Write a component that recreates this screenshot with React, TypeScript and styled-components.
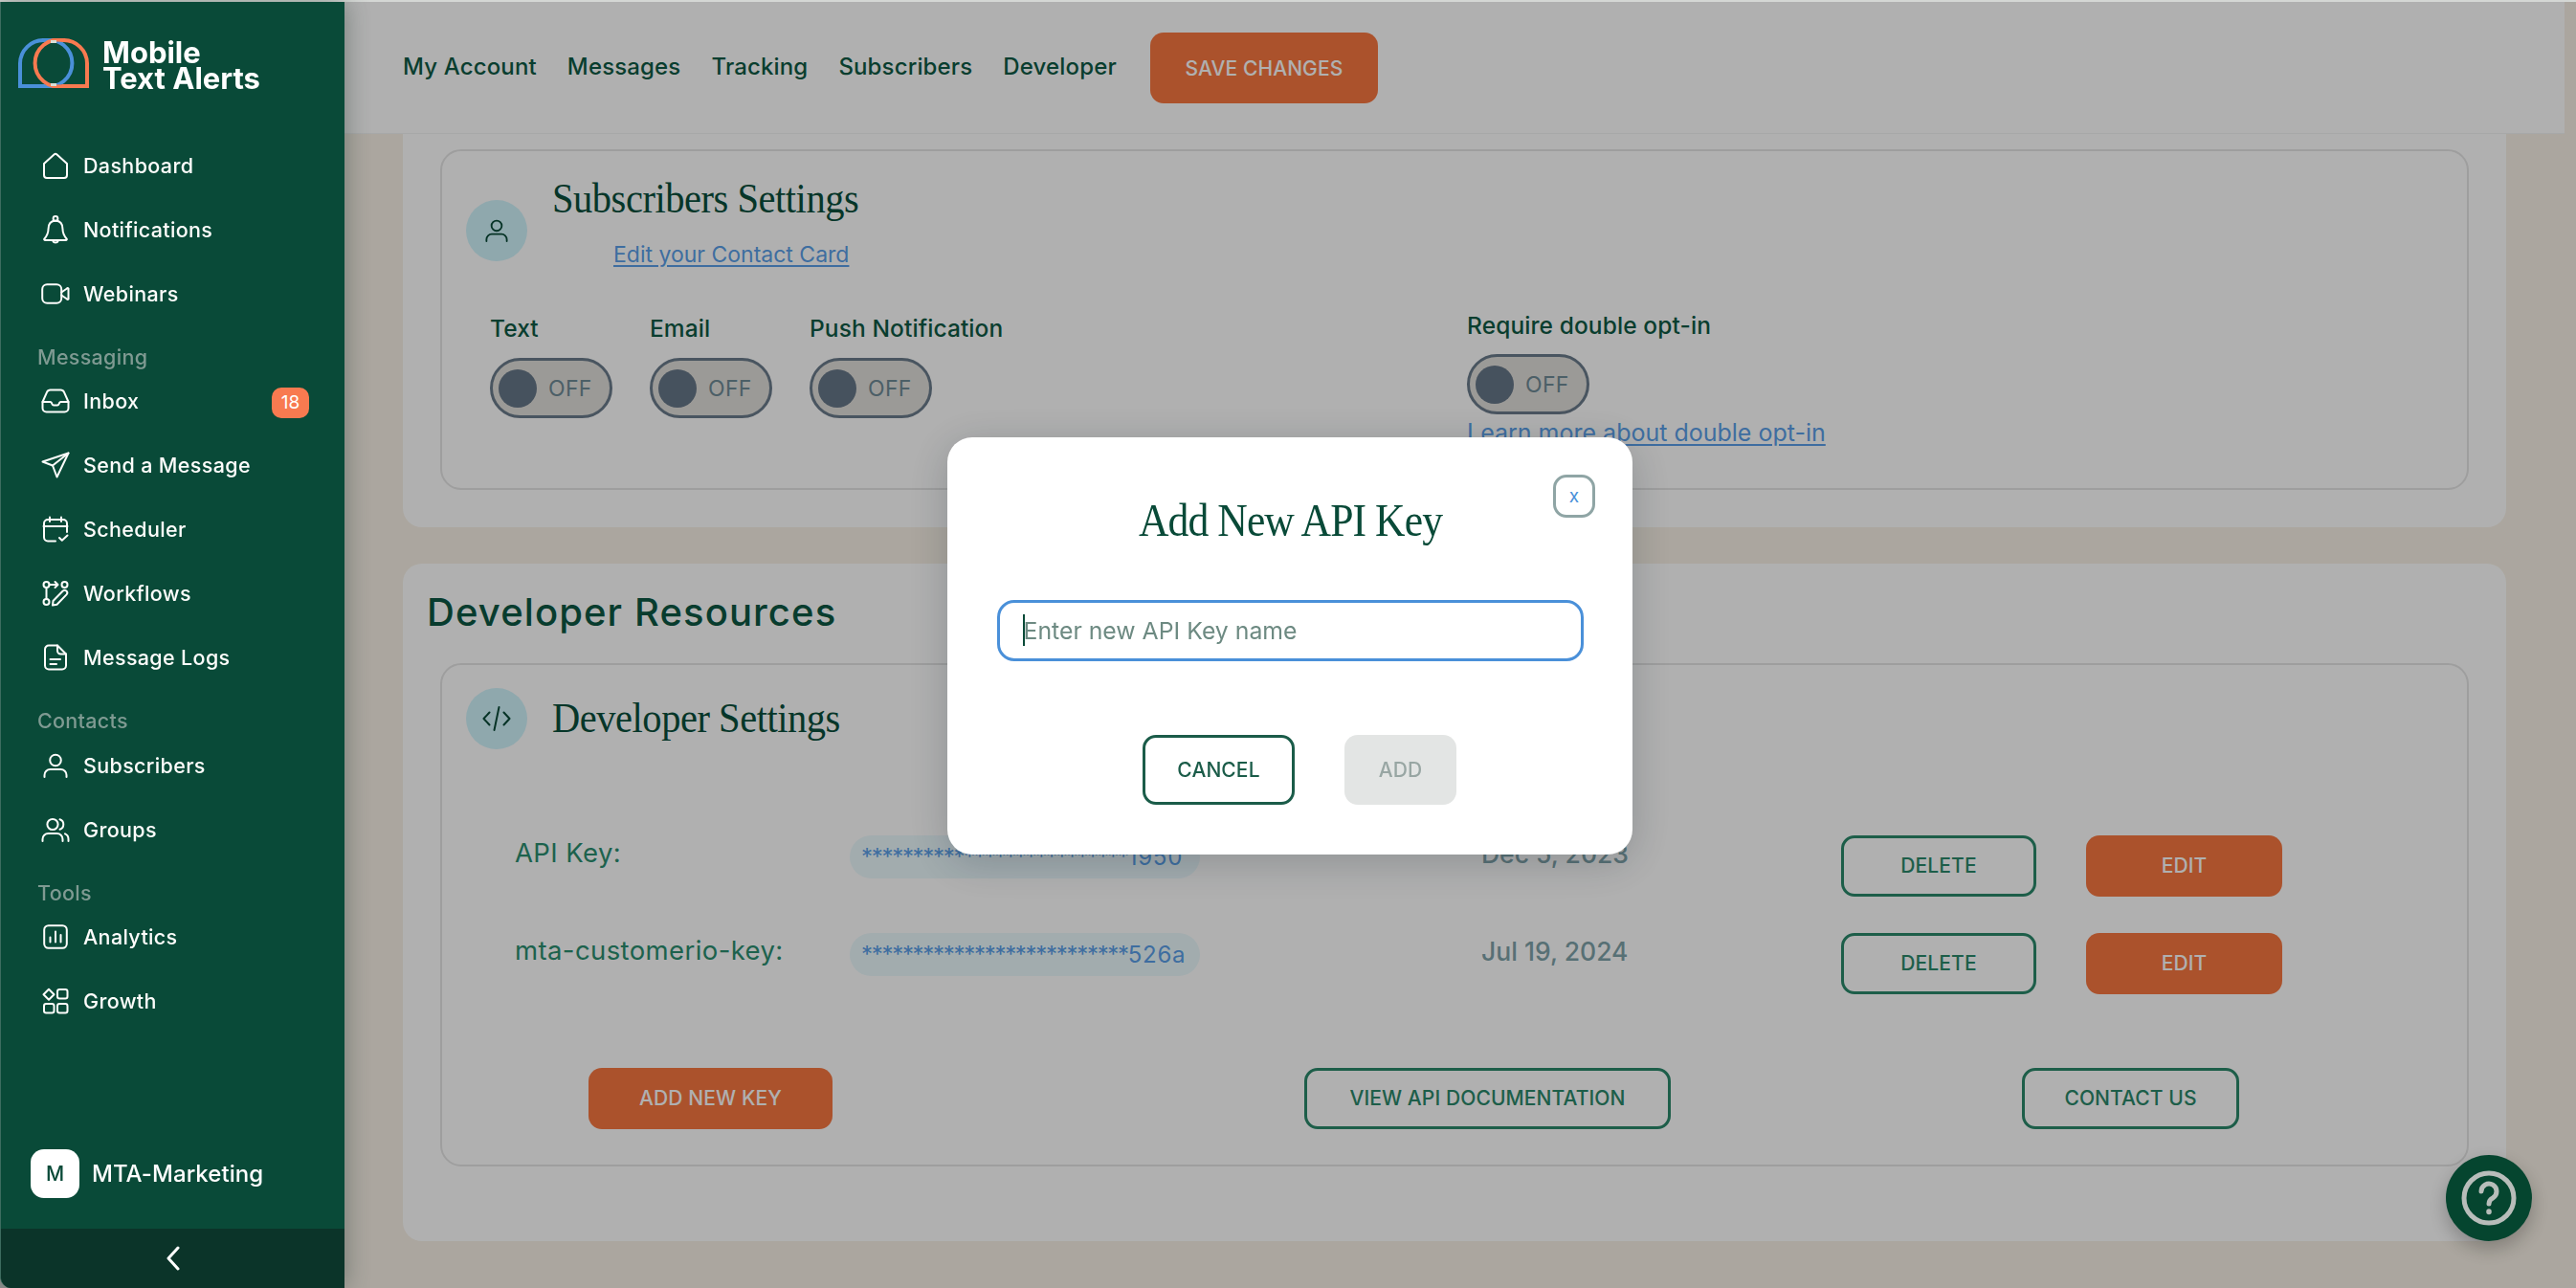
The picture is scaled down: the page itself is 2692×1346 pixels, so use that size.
import React from "react";
import styled, { createGlobalStyle } from "styled-components";

const Global = createGlobalStyle`
  html, body { margin: 0; padding: 0; width: 2692px; height: 1346px; overflow: hidden; background: #d4d7d4; }
  * { box-sizing: border-box; }
  body { font-family: Inter, "Liberation Sans", sans-serif; }
`;

const SANS = `Inter, "Liberation Sans", sans-serif`;
const SERIF = `"Liberation Serif", serif`;

const Page = styled.div`
  width: 2692px;
  height: 1346px;
  padding-top: 2px;
  display: flex;
  overflow: hidden;
`;

const Sidebar = styled.aside`
  position: relative;
  z-index: 3;
  width: 360px;
  flex: none;
  background: #094a38;
  border-left: 1px solid #3d6c5f;
  border-bottom-left-radius: 12px;
  box-shadow: 0 0 26px rgba(40, 60, 50, 0.45);
  display: flex;
  flex-direction: column;
  color: #fff;
  overflow: hidden;
`;

const Brand = styled.div`
  display: flex;
  gap: 14px;
  padding: 38px 0 0 18px;
  height: 137px;
  align-items: flex-start;
`;

const BrandName = styled.div`
  font-family: ${SANS};
  font-weight: 700;
  font-size: 31px;
  line-height: 27px;
  letter-spacing: 0;
  margin-top: 1px;
`;

const Nav = styled.nav`
  display: flex;
  flex-direction: column;
`;

const Item = styled.div`
  height: 67px;
  padding-left: 42px;
  display: flex;
  align-items: center;
  gap: 14px;
  font-size: 21.5px;
  font-weight: 500;
  letter-spacing: 0.35px;
  color: #fdfdfb;
  position: relative;
`;

const IconBox = styled.span`
  width: 30px;
  height: 30px;
  flex: none;
  display: flex;
  align-items: center;
  justify-content: center;
`;

const Section = styled.div`
  height: 45.6px;
  padding-left: 38px;
  display: flex;
  align-items: flex-end;
  font-size: 21.5px;
  line-height: 26px;
  font-weight: 500;
  letter-spacing: 0.3px;
  color: #7f9a92;
`;

const Badge = styled.span`
  position: absolute;
  right: 37px;
  top: 19px;
  width: 39px;
  height: 32px;
  border-radius: 10px;
  background: #f87a50;
  color: #fff;
  font-size: 19px;
  font-weight: 400;
  letter-spacing: 0;
  display: flex;
  align-items: center;
  justify-content: center;
`;

const Account = styled.div`
  margin-top: auto;
  height: 83px;
  padding: 0 0 32px 31px;
  display: flex;
  align-items: center;
  gap: 13px;
  font-size: 24px;
  font-weight: 500;
  letter-spacing: 0.05px;
`;

const Avatar = styled.span`
  width: 51px;
  height: 51px;
  border-radius: 14px;
  background: #fff;
  color: #094a38;
  font-size: 21px;
  font-weight: 500;
  display: flex;
  align-items: center;
  justify-content: center;
`;

const Collapse = styled.div`
  height: 62px;
  background: #0b3429;
  display: flex;
  align-items: center;
  justify-content: center;
`;

const Main = styled.main`
  flex: 1;
  min-width: 0;
  display: flex;
  flex-direction: column;
  background: #f8f1e6;
`;

const Header = styled.header`
  height: 138px;
  width: 2320px;
  flex: none;
  background: #fff;
  padding: 32px 0 0 61px;
  display: flex;
  align-items: flex-start;
  gap: 32px;
  border-bottom: 1px solid #f2f4f4;
`;

const HeaderLink = styled.a`
  font-size: 24px;
  line-height: 72px;
  font-weight: 500;
  letter-spacing: 0.15px;
  color: #0e5a45;
`;

const Button = styled.button<{ $kind: "solid" | "line" | "off"; $w: number; $h?: number }>`
  width: ${(p) => p.$w}px;
  height: ${(p) => p.$h ?? 64}px;
  flex: none;
  border-radius: 14px;
  font-family: ${SANS};
  font-size: 21px;
  font-weight: 500;
  letter-spacing: 0.1px;
  padding: 0 0 ${(p) => (p.$h ? 0 : 2)}px;
  background: ${(p) => (p.$kind === "solid" ? "#f87841" : p.$kind === "off" ? "#e3e5e4" : "transparent")};
  color: ${(p) => (p.$kind === "solid" ? "#fff" : p.$kind === "off" ? "#98a6a3" : "#2a886b")};
  border: ${(p) => (p.$kind === "line" ? "3px solid #2a886b" : "0")};
`;

const SaveButton = styled(Button)`
  margin-left: 3px;
`;

const Content = styled.div`
  padding: 0 73px 0 61px;
  display: flex;
  flex-direction: column;
  gap: 38px;
`;

const Card = styled.section<{ $pt: number; $pb: number }>`
  background: #fff;
  border-radius: 0 0 20px 20px;
  padding: ${(p) => p.$pt}px 39px ${(p) => p.$pb}px;
  &:last-child {
    border-radius: 20px;
  }
`;

const SectionTitle = styled.h2`
  margin: 0 0 29px -14px;
  font-size: 40px;
  line-height: 48px;
  font-weight: 500;
  letter-spacing: 1.1px;
  color: #0c5843;
`;

const Panel = styled.div<{ $pt: number }>`
  border: 2px solid #e5e5e5;
  border-radius: 22px;
  padding-top: ${(p) => p.$pt}px;
`;

const HeadRow = styled.div`
  display: flex;
  align-items: center;
  gap: 26px;
  padding-left: 25px;
`;

const IconCircle = styled.span<{ $sink?: boolean }>`
  width: 64px;
  height: 64px;
  flex: none;
  border-radius: 50%;
  background: #d0f3fb;
  display: flex;
  align-items: center;
  justify-content: center;
  color: #094a38;
  align-self: ${(p) => (p.$sink ? "flex-end" : "center")};
  margin-bottom: ${(p) => (p.$sink ? "6px" : "0")};
`;

const TitleStack = styled.div`
  display: flex;
  flex-direction: column;
  gap: 20px;
`;

const SerifTitle = styled.h3`
  margin: 0;
  font-family: ${SERIF};
  font-weight: 400;
  font-size: 44px;
  line-height: 50px;
  letter-spacing: -0.5px;
  color: #094f3c;
  transform: scaleX(0.92);
  transform-origin: left center;
`;

const TextLink = styled.a<{ $indent?: number; $size: number }>`
  display: block;
  margin-left: ${(p) => p.$indent ?? 0}px;
  font-size: ${(p) => p.$size}px;
  line-height: 26px;
  font-weight: 400;
  color: #5a9fe8;
  text-decoration: underline;
  text-underline-offset: 3px;
`;

const SettingsRow = styled.div`
  display: grid;
  grid-template-columns: 1021px 1fr;
  margin-top: 47px;
  padding: 0 0 45px 50px;
`;

const ToggleGroupRow = styled.div`
  display: flex;
  align-items: flex-start;
  padding-top: 3px;
  gap: 39px;
`;

const ToggleGroup = styled.div<{ $gap: number }>`
  display: flex;
  flex-direction: column;
  align-items: flex-start;
  gap: ${(p) => p.$gap}px;
`;

const ToggleLabel = styled.div`
  font-size: 24.5px;
  line-height: 28px;
  font-weight: 500;
  letter-spacing: 0.1px;
  color: #0e5a45;
`;

const Toggle = styled.div`
  width: 128px;
  height: 63px;
  border: 3px solid #6b7b8b;
  border-radius: 32px;
  background: #e1dfdb;
  padding-left: 6px;
  display: flex;
  align-items: center;
  gap: 12px;
  font-size: 23px;
  letter-spacing: 0.3px;
  font-weight: 400;
  color: #6e8a96;
`;

const Knob = styled.span`
  width: 40px;
  height: 40px;
  border-radius: 50%;
  background: #667788;
`;

const DoubleOptIn = styled.div`
  display: flex;
  flex-direction: column;
  align-items: flex-start;
`;

const Spaced = styled.div`
  margin-top: 6px;
`;

const KeyRows = styled.div`
  margin-top: 90px;
  padding-left: 76px;
  display: flex;
  flex-direction: column;
  gap: 38px;
`;

const KeyRow = styled.div`
  display: grid;
  grid-template-columns: 350px 660px 376px 256px 205px;
  align-items: start;
`;

const KeyName = styled.div`
  height: 45px;
  padding-bottom: 9px;
  display: flex;
  align-items: center;
  font-size: 27.5px;
  letter-spacing: 0.4px;
  font-weight: 400;
  color: #2b8f70;
`;

const KeyValue = styled.div`
  width: 366px;
  height: 45px;
  border-radius: 23px;
  background: #ebf9fd;
  padding-left: 12px;
  display: flex;
  align-items: center;
  font-size: 24px;
  line-height: 1;
  letter-spacing: 0.7px;
  color: #5a9fe8;
`;

const Stars = styled.span`
  letter-spacing: -1.3px;
`;

const KeyDate = styled.div`
  height: 45px;
  padding-bottom: 8px;
  display: flex;
  align-items: center;
  font-size: 26.5px;
  font-weight: 500;
  color: #7fa3aa;
`;

const FooterRow = styled.div`
  margin-top: 77px;
  padding: 0 0 37px 153px;
  display: grid;
  grid-template-columns: 748px 750px auto;
`;

const Overlay = styled.div`
  position: fixed;
  inset: 2px 0 0 0;
  z-index: 2;
  background: rgba(0, 0, 0, 0.31);
  display: flex;
  align-items: center;
  justify-content: center;
`;

const Modal = styled.div`
  position: relative;
  left: 2px;
  top: 1px;
  width: 716px;
  height: 436px;
  background: #fff;
  border-radius: 26px;
  box-shadow: 0 8px 44px rgba(20, 30, 40, 0.22);
  display: flex;
  flex-direction: column;
  align-items: center;
  padding-top: 59px;
`;

const ModalTitle = styled.h2`
  margin: 0;
  font-family: ${SERIF};
  font-weight: 400;
  font-size: 48px;
  line-height: 56px;
  letter-spacing: -1px;
  color: #094a38;
  transform: scaleX(0.909);
`;

const CloseButton = styled.button`
  position: absolute;
  right: 39px;
  top: 39px;
  width: 44px;
  height: 45px;
  border-radius: 14px;
  border: 3px solid #8fa5a5;
  background: #fff;
  color: #4a90d9;
  font-family: ${SANS};
  font-size: 19px;
  padding: 0;
`;

const InputWrap = styled.div`
  position: relative;
  margin-top: 55px;
  width: 613px;
  height: 64px;
`;

const Input = styled.input`
  width: 100%;
  height: 100%;
  border: 3px solid #4a90d9;
  border-radius: 18px;
  padding: 0 0 0 25px;
  outline: none;
  font-family: ${SANS};
  font-size: 24.8px;
  color: #094a38;
  &::placeholder {
    color: #6d8a82;
    opacity: 1;
  }
`;

const Caret = styled.span`
  position: absolute;
  left: 27px;
  top: 15px;
  width: 2px;
  height: 33px;
  background: #094a38;
`;

const ModalActions = styled.div`
  margin: 77px 0 0 20px;
  display: flex;
  gap: 52px;
`;

const ModalButton = styled(Button)`
  border-color: #1b5c49;
  color: ${(p) => (p.$kind === "line" ? "#1b5c49" : "#98a6a3")};
`;

const HelpButton = styled.div`
  position: fixed;
  z-index: 4;
  left: 2556px;
  top: 1207px;
  width: 90px;
  height: 90px;
  border-radius: 50%;
  background: #05452f;
  box-shadow: 0 8px 20px rgba(0, 0, 0, 0.25);
  display: flex;
  align-items: center;
  justify-content: center;
`;

const stroke = {
  fill: "none",
  stroke: "currentColor",
  strokeWidth: 2,
  strokeLinecap: "round" as const,
  strokeLinejoin: "round" as const,
};

const Ico = ({ w = 28, h = 28, vb = "0 0 28 28", children }: { w?: number; h?: number; vb?: string; children: React.ReactNode }) => (
  <svg width={w} height={h} viewBox={vb} {...stroke}>
    {children}
  </svg>
);

const Logo = () => (
  <svg width="74" height="52" viewBox="0 0 74 52" fill="none" strokeWidth="4">
    <path d="M27 2A24.5 24.5 0 1 1 27 50H2V26A24.5 24.5 0 0 1 27 2Z" stroke="#4a90d9" />
    <path d="M47 2A24.5 24.5 0 1 0 47 50H72V26A24.5 24.5 0 0 0 47 2Z" stroke="#f87a50" />
    <path d="M34 3.5 L40 3.5 M34 48.5 L40 48.5" stroke="#d9dfd8" strokeWidth="3" />
  </svg>
);

const icons: Record<string, React.ReactNode> = {
  home: (
    <Ico>
      <path d="M2 12 L12.5 2.4 a2.2 2.2 0 0 1 3 0 L26 12 V24 a3 3 0 0 1-3 3 H5 a3 3 0 0 1-3-3 Z" />
    </Ico>
  ),
  bell: (
    <Ico w={28} h={30} vb="0 0 28 30">
      <circle cx="14" cy="3.4" r="2.4" />
      <path d="M14 5.8 C8.5 5.8 6.5 10 6.5 14.5 C6.5 19 5 21.5 2.4 24.5 a0.8 0.8 0 0 0 .6 1.4 H25 a0.8 0.8 0 0 0 .6-1.4 C23 21.5 21.5 19 21.5 14.5 C21.5 10 19.5 5.8 14 5.8 Z" />
      <path d="M11 26.5 a3.2 3.2 0 0 0 6 0" />
    </Ico>
  ),
  video: (
    <Ico w={30} h={22} vb="0 0 30 22">
      <rect x="1.2" y="1.2" width="20" height="19.6" rx="5" />
      <path d="M21.2 9.5 L27 5.5 a.8.8 0 0 1 1.5.7 V15.8 a.8.8 0 0 1-1.5.7 L21.2 12.5" />
    </Ico>
  ),
  inbox: (
    <Ico w={30} h={26} vb="0 0 30 26">
      <path d="M1.5 14 L6 3.8 A4 4 0 0 1 9.6 1.5 H20.4 A4 4 0 0 1 24 3.8 L28.5 14" />
      <path d="M1.5 14 V20.5 A4 4 0 0 0 5.5 24.5 H24.5 A4 4 0 0 0 28.5 20.5 V14 H20.5 Q19.5 14 19 15.2 L18.6 16.2 Q18 17.5 17 17.5 H13 Q12 17.5 11.4 16.2 L11 15.2 Q10.5 14 9.5 14 Z" />
    </Ico>
  ),
  send: (
    <Ico w={30} h={28} vb="0 0 30 28">
      <path d="M28.5 1.5 L1.5 10.5 L12 14.5 L16.5 26.5 Z" />
      <path d="M28.5 1.5 L12 14.5" />
    </Ico>
  ),
  calendar: (
    <Ico>
      <path d="M8 1.5 V6 M20 1.5 V6 M1.5 11 H26.5" />
      <path d="M14 26.5 H6 A4 4 0 0 1 2 22.5 V8 A4 4 0 0 1 6 4 H22 A4 4 0 0 1 26 8 V17" />
      <path d="M18 23 L20.8 25.8 L26.5 20.5" />
    </Ico>
  ),
  flow: (
    <Ico>
      <circle cx="4.5" cy="5" r="3" />
      <circle cx="4.5" cy="23" r="3" />
      <circle cx="23.5" cy="5" r="3" />
      <path d="M4.5 8 V20 M7.5 5 H16 M13.5 2 L16.5 5 L13.5 8" />
      <path d="M11.5 22 L21.5 11.8 a2.6 2.6 0 0 1 4 3.6 L15.5 25.8 L11 26.5 Z" />
    </Ico>
  ),
  file: (
    <Ico>
      <path d="M16 1.5 H7 A4 4 0 0 0 3 5.5 V22.5 A4 4 0 0 0 7 26.5 H21 A4 4 0 0 0 25 22.5 V10.5 Z" />
      <path d="M16 1.5 V7 A3.5 3.5 0 0 0 19.5 10.5 H25 M8.5 16 H19 M8.5 21 H15" />
    </Ico>
  ),
  user: (
    <Ico w={26} h={26} vb="0 0 26 26">
      <circle cx="13" cy="7.5" r="5.8" />
      <path d="M1.5 25 V23 A6 6 0 0 1 7.5 17 H18.5 A6 6 0 0 1 24.5 23 V25" />
    </Ico>
  ),
  users: (
    <Ico w={30} h={26} vb="0 0 30 26">
      <circle cx="12" cy="7.5" r="5.6" />
      <path d="M1.5 25 V23 A6 6 0 0 1 7.5 17 H16.5 A6 6 0 0 1 22.5 23 V25" />
      <path d="M19.5 2.2 A5.6 5.6 0 0 1 19.5 12.8 M28.5 25 V23 A6 6 0 0 0 25 17.4" />
    </Ico>
  ),
  chart: (
    <Ico w={26} h={26} vb="0 0 26 26">
      <rect x="1.2" y="1.2" width="23.6" height="23.6" rx="4.5" />
      <path d="M7.5 18.5 V13.5 M13 18.5 V7.5 M18.5 18.5 V11" />
    </Ico>
  ),
  grid: (
    <Ico w={28} h={28} vb="0 0 28 28">
      <path d="M7 1.8 L12.5 7.3 L7 12.8 L1.5 7.3 Z" />
      <rect x="16" y="2" width="10.5" height="9.5" rx="2.2" />
      <rect x="2" y="17" width="10.5" height="9.5" rx="2.2" />
      <rect x="16" y="17" width="10.5" height="9.5" rx="2.2" />
    </Ico>
  ),
};

const NavItem = ({ icon, label, badge }: { icon: string; label: string; badge?: string }) => (
  <Item>
    <IconBox>{icons[icon]}</IconBox>
    {label}
    {badge && <Badge>{badge}</Badge>}
  </Item>
);

const UserGlyph = () => (
  <Ico w={24} h={26} vb="0 0 26 26">
    <circle cx="13" cy="7.5" r="5.8" />
    <path d="M1.5 25 V23 A6 6 0 0 1 7.5 17 H18.5 A6 6 0 0 1 24.5 23 V25" />
  </Ico>
);

const CodeGlyph = () => (
  <Ico w={30} h={28} vb="0 0 30 28">
    <path d="M7.5 7.5 L1.5 14 L7.5 20.5 M22.5 7.5 L28.5 14 L22.5 20.5 M17.5 2 L12.5 26" />
  </Ico>
);

const OffToggle = () => (
  <Toggle>
    <Knob />
    OFF
  </Toggle>
);

const ToggleField = ({ label }: { label: string }) => (
  <ToggleGroup $gap={17}>
    <ToggleLabel>{label}</ToggleLabel>
    <OffToggle />
  </ToggleGroup>
);

const KeyLine = ({ name, suffix, date }: { name: string; suffix: string; date: string }) => (
  <KeyRow>
    <KeyName>{name}</KeyName>
    <KeyValue>
      <Stars>**************************</Stars>
      {suffix}
    </KeyValue>
    <KeyDate>{date}</KeyDate>
    <Button $kind="line" $w={204}>DELETE</Button>
    <Button $kind="solid" $w={205}>EDIT</Button>
  </KeyRow>
);

export default function App() {
  return (
    <Page>
      <Global />
      <Sidebar>
        <Brand>
          <Logo />
          <BrandName>
            Mobile
            <br />
            Text Alerts
          </BrandName>
        </Brand>
        <Nav>
          <NavItem icon="home" label="Dashboard" />
          <NavItem icon="bell" label="Notifications" />
          <NavItem icon="video" label="Webinars" />
          <Section>Messaging</Section>
          <NavItem icon="inbox" label="Inbox" badge="18" />
          <NavItem icon="send" label="Send a Message" />
          <NavItem icon="calendar" label="Scheduler" />
          <NavItem icon="flow" label="Workflows" />
          <NavItem icon="file" label="Message Logs" />
          <Section>Contacts</Section>
          <NavItem icon="user" label="Subscribers" />
          <NavItem icon="users" label="Groups" />
          <Section>Tools</Section>
          <NavItem icon="chart" label="Analytics" />
          <NavItem icon="grid" label="Growth" />
        </Nav>
        <Account>
          <Avatar>M</Avatar>
          MTA-Marketing
        </Account>
        <Collapse>
          <svg width="16" height="26" viewBox="0 0 16 26" fill="none" stroke="#fff" strokeWidth="3" strokeLinecap="round" strokeLinejoin="round">
            <path d="M13 2 L3 13 L13 24" />
          </svg>
        </Collapse>
      </Sidebar>

      <Main>
        <Header>
          <HeaderLink>My Account</HeaderLink>
          <HeaderLink>Messages</HeaderLink>
          <HeaderLink>Tracking</HeaderLink>
          <HeaderLink>Subscribers</HeaderLink>
          <HeaderLink>Developer</HeaderLink>
          <SaveButton $kind="solid" $w={238} $h={74}>SAVE CHANGES</SaveButton>
        </Header>
        <Content>
          <Card $pt={16} $pb={39}>
            <Panel $pt={25}>
              <HeadRow>
                <IconCircle $sink>
                  <UserGlyph />
                </IconCircle>
                <TitleStack>
                  <SerifTitle>Subscribers Settings</SerifTitle>
                  <TextLink $indent={64} $size={23}>Edit your Contact Card</TextLink>
                </TitleStack>
              </HeadRow>
              <SettingsRow>
                <ToggleGroupRow>
                  <ToggleField label="Text" />
                  <ToggleField label="Email" />
                  <ToggleField label="Push Notification" />
                </ToggleGroupRow>
                <DoubleOptIn>
                  <ToggleGroup $gap={16}>
                    <ToggleLabel>Require double opt-in</ToggleLabel>
                    <OffToggle />
                  </ToggleGroup>
                  <Spaced>
                    <TextLink $size={25}>Learn more about double opt-in</TextLink>
                  </Spaced>
                </DoubleOptIn>
              </SettingsRow>
            </Panel>
          </Card>
          <Card $pt={27} $pb={78}>
            <SectionTitle>Developer Resources</SectionTitle>
            <Panel $pt={24}>
              <HeadRow>
                <IconCircle>
                  <CodeGlyph />
                </IconCircle>
                <SerifTitle>Developer Settings</SerifTitle>
              </HeadRow>
              <KeyRows>
                <KeyLine name="API Key:" suffix="1950" date="Dec 5, 2023" />
                <KeyLine name="mta-customerio-key:" suffix="526a" date="Jul 19, 2024" />
              </KeyRows>
              <FooterRow>
                <div><Button $kind="solid" $w={255}>ADD NEW KEY</Button></div>
                <div><Button $kind="line" $w={383}>VIEW API DOCUMENTATION</Button></div>
                <div><Button $kind="line" $w={227}>CONTACT US</Button></div>
              </FooterRow>
            </Panel>
          </Card>
        </Content>
      </Main>

      <Overlay>
        <Modal>
          <ModalTitle>Add New API Key</ModalTitle>
          <CloseButton>x</CloseButton>
          <InputWrap>
            <Input placeholder="Enter new API Key name" />
            <Caret />
          </InputWrap>
          <ModalActions>
            <ModalButton $kind="line" $w={159} $h={73}>CANCEL</ModalButton>
            <ModalButton $kind="off" $w={117} $h={73}>ADD</ModalButton>
          </ModalActions>
        </Modal>
      </Overlay>

      <HelpButton>
        <svg width="60" height="60" viewBox="0 0 60 60" fill="none" stroke="#b8bdba" strokeWidth="5" strokeLinecap="round">
          <circle cx="30" cy="30" r="26" />
          <path d="M22 23 a8 8 0 1 1 12 7 q-4 2 -4 6" />
          <path d="M30 44 v.5" strokeWidth="5.5" />
        </svg>
      </HelpButton>
    </Page>
  );
}
